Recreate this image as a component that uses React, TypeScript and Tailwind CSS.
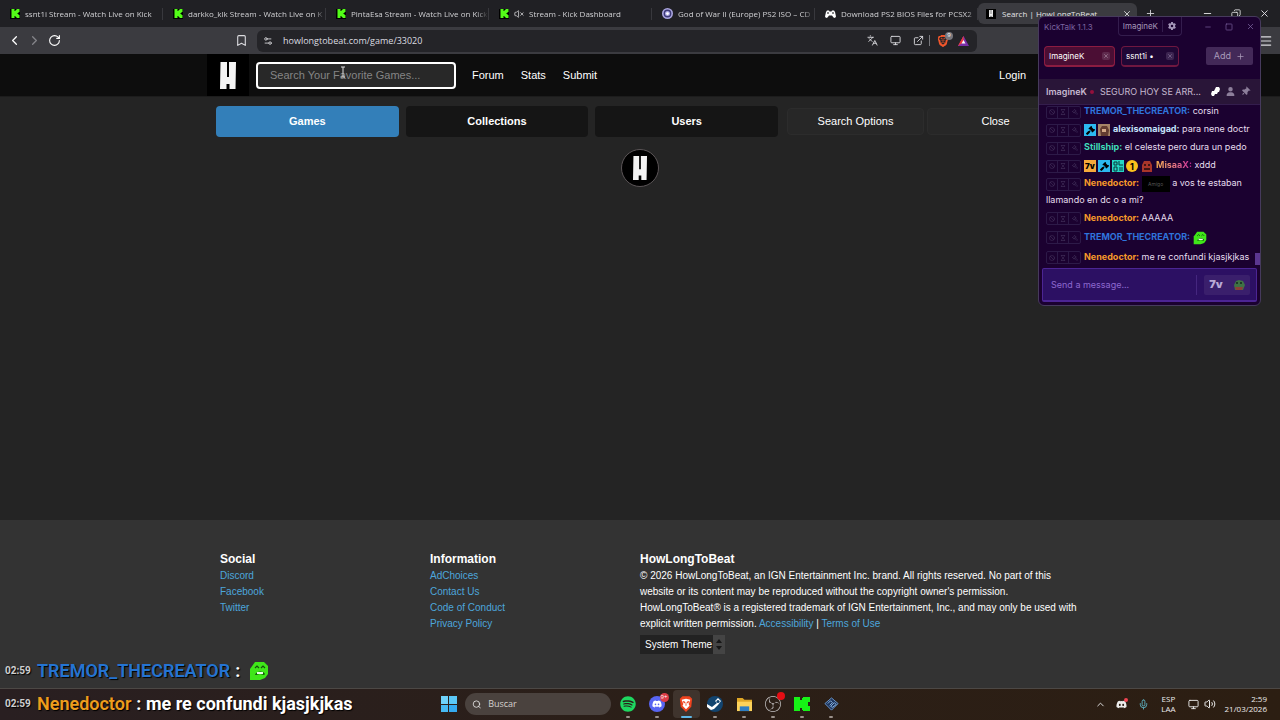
import type { ReactNode } from 'react'
import {
  Ban,
  Bookmark,
  ChevronLeft,
  ChevronRight,
  ChevronUp,
  Copy,
  ExternalLink,
  Gavel,
  Hourglass,
  Languages,
  Menu,
  Mic,
  Minus,
  Monitor,
  Plus,
  RotateCw,
  Search,
  Settings2,
  Square,
  Volume2,
  VolumeX,
  X,
} from 'lucide-react'
import {
  FaBrave,
  FaDiscord,
  FaGavel,
  FaGear,
  FaSpotify,
  FaThumbtack,
  FaUser,
} from 'react-icons/fa6'
import { SiKick, SiObsstudio } from 'react-icons/si'

function KickIcon() {
  return (
    <span className="flex size-[10px] shrink-0 items-center justify-center bg-black">
      <SiKick className="size-[9px] text-[#53fc18]" />
    </span>
  )
}

function HLogo({ className }: { className: string }) {
  return (
    <svg viewBox="0 0 16 27" className={className} fill="#f4f4f4" preserveAspectRatio="none">
      <path d="M.5 0h6.500v15h2V0h7l-.5 27H9.500v-5h-3v5H0z" />
    </svg>
  )
}

function FrogEmote({ className }: { className: string }) {
  return (
    <svg viewBox="0 0 20 20" className={className}>
      <path d="M6 1h9l4 4v8l-3 4-5 2H1V8z" fill="#3fe619" />
      <path d="M6 7l2-2 2 2M12 7l2-2 2 2" stroke="#14500c" strokeWidth="1.2" fill="none" />
      <path d="M6 14c1-4 8-5 10-1l-1 1-4-1-4 1z" fill="#14500c" />
      <path d="M8 11h6v2H8z" fill="#e9ffe5" />
    </svg>
  )
}

function DiscIcon() {
  return (
    <svg viewBox="0 0 24 24" className="size-[11px] shrink-0">
      <circle cx="12" cy="12" r="12" fill="#aba6e0" />
      <circle cx="12" cy="12" r="7" fill="none" stroke="#3d3a77" strokeWidth="3" />
      <circle cx="12" cy="12" r="3" fill="#fff" />
    </svg>
  )
}

function ControllerIcon() {
  return (
    <svg viewBox="0 0 22 16" className="h-[8px] w-[11px] shrink-0">
      <path d="M4 1h4l1 2h4l1-2h4l2 3 2 9-2 3-3-1-3-4H8l-3 4-3 1-2-3 2-9z" fill="#fff" />
      <path d="M4 6h4M6 4v4M14 6h4M16 4v4" stroke="#202024" strokeWidth="1.3" />
    </svg>
  )
}

const tabs: { title: string; icon: ReactNode; muted?: boolean }[] = [
  { title: 'ssnt1i Stream - Watch Live on Kick', icon: <KickIcon /> },
  { title: 'darkko_klk Stream - Watch Live on K', icon: <KickIcon /> },
  { title: 'PintaEsa Stream - Watch Live on Kick', icon: <KickIcon /> },
  { title: 'Stream - Kick Dashboard', icon: <KickIcon />, muted: true },
  { title: 'God of War II (Europe) PS2 ISO – CD', icon: <DiscIcon /> },
  { title: 'Download PS2 BIOS Files for PCSX2', icon: <ControllerIcon /> },
]

function TabStrip() {
  return (
    <div className="flex h-[27px] items-center bg-[#202024] text-[8px] text-[#d0d0d3]">
      {tabs.map((tab) => (
        <button key={tab.title} className="flex h-[22px] w-[163px] items-center text-left">
          <span className="flex min-w-0 flex-1 items-center gap-[5px] pl-[10px]">
            {tab.icon}
            {tab.muted && <VolumeX className="size-[10px] shrink-0" />}
            <span className="flex-1 overflow-hidden whitespace-nowrap [mask-image:linear-gradient(to_right,black_92%,transparent)]">
              {tab.title}
            </span>
          </span>
          <span className="h-[12px] w-px bg-[#38383d]" />
        </button>
      ))}
      <div className="flex h-[21px] w-[159px] items-center rounded-md bg-[#3b3b40] pr-[5px] pl-[8px] text-[#e4e4e6]">
        <span className="mr-[6px] flex size-[10px] items-center justify-center bg-black">
          <HLogo className="h-[7px] w-[4px]" />
        </span>
        <span className="flex-1 whitespace-nowrap">Search | HowLongToBeat</span>
        <button aria-label="Close tab">
          <X className="size-[10px]" />
        </button>
      </div>
      <button aria-label="New tab" className="ml-[8px]">
        <Plus className="size-[11px]" />
      </button>
      <div className="ml-auto flex gap-[18px] pr-[10px] text-[#e4e4e6]">
        <button aria-label="Minimize"><Minus className="size-[11px]" /></button>
        <button aria-label="Restore"><Copy className="size-[10px] -scale-x-100" /></button>
        <button aria-label="Close"><X className="size-[11px]" /></button>
      </div>
    </div>
  )
}

function Toolbar() {
  return (
    <div className="flex h-[27px] items-center bg-[#3b3b40] text-[#dcdce0]">
      <div className="flex w-[257px] items-center pr-[9px] pl-[7px]">
        <button aria-label="Back"><ChevronLeft className="size-[15px] text-white" /></button>
        <button aria-label="Forward" className="ml-[5px]"><ChevronRight className="size-[15px] text-[#85858a]" /></button>
        <button aria-label="Reload" className="ml-[6px]"><RotateCw className="size-[13px] text-white" /></button>
        <button aria-label="Bookmark" className="ml-auto"><Bookmark className="size-[13px]" /></button>
      </div>
      <div className="flex h-[22px] flex-1 items-center rounded-md bg-[#242428] pr-[8px] pl-[6px]">
        <Settings2 className="size-[10px]" />
        <input
          aria-label="Address"
          defaultValue="howlongtobeat.com/game/33020"
          className="ml-[10px] min-w-0 flex-1 bg-transparent text-[9px] outline-none"
        />
        <div className="flex items-center gap-[12px]">
          <Languages className="size-[11px]" />
          <Monitor className="size-[11px]" />
          <ExternalLink className="size-[11px]" />
        </div>
        <span className="mx-[5px] h-[11px] w-px bg-[#77777c]" />
        <span className="relative mr-[9px] ml-[2px]">
          <FaBrave className="size-[12px] text-[#f1562b]" />
          <span className="absolute -top-[3px] -right-[4px] flex size-[8px] items-center justify-center rounded-full bg-[#77777d] text-[6px] text-white">
            9
          </span>
        </span>
        <svg viewBox="0 0 22 20" className="h-[10px] w-[11px]">
          <path d="M11 0L0 20h11z" fill="#e2315a" />
          <path d="M11 0l11 20H0l4-6z" fill="#7a2fa8" />
          <path d="M11 0L0 20l11-8z" fill="#ee3b3b" />
          <path d="M11 8l4 7H7z" fill="#fff" />
        </svg>
      </div>
      <div className="flex w-[303px] justify-end pr-[7px]">
        <button aria-label="Menu"><Menu className="size-[14px]" /></button>
      </div>
    </div>
  )
}

function SiteHeader() {
  return (
    <header className="h-[43px] border-b border-[#1c1c1c] bg-[#0d0d0d]">
      <div className="mx-auto flex h-full max-w-[866px] items-center text-[11px] text-white">
        <a href="#home" aria-label="Home" className="flex h-full w-[42px] items-center justify-center bg-black">
          <HLogo className="h-[27px] w-[16px]" />
        </a>
        <input
          type="search"
          aria-label="Search games"
          placeholder="Search Your Favorite Games..."
          className="ml-[7px] h-[27px] w-[200px] rounded border-2 border-white bg-[#282828] px-[12px] placeholder:text-[#858585]"
        />
        <nav className="ml-[16px] flex flex-1 gap-[17px]">
          <a href="#forum">Forum</a>
          <a href="#stats">Stats</a>
          <a href="#submit">Submit</a>
          <a href="#login" className="mr-[47px] ml-auto">Login</a>
        </nav>
      </div>
    </header>
  )
}

function SearchPage() {
  return (
    <main className="flex-1 bg-[#242424] pt-[9px]">
      <div className="mx-auto flex max-w-[848px] items-center text-[11px] text-white">
        <div className="flex flex-1 gap-[7px] font-bold">
          <button className="h-[31px] flex-1 rounded-sm bg-[#337fb9]">Games</button>
          <button className="h-[31px] flex-1 rounded-sm bg-[#151515]">Collections</button>
          <button className="h-[31px] flex-1 rounded-sm bg-[#151515]">Users</button>
        </div>
        <div className="ml-[9px] flex w-[277px] gap-[3px]">
          <button className="h-[27px] flex-1 rounded-sm border border-[#2c2c2c] bg-[#272727]">Search Options</button>
          <button className="h-[27px] flex-1 rounded-sm border border-[#2c2c2c] bg-[#272727]">Close</button>
        </div>
      </div>
      <div className="mx-auto mt-[12px] flex size-[38px] items-center justify-center rounded-full border border-[#5b5557] bg-black">
        <HLogo className="h-[24px] w-[14px]" />
      </div>
    </main>
  )
}

const socialLinks = ['Discord', 'Facebook', 'Twitter']
const infoLinks = ['AdChoices', 'Contact Us', 'Code of Conduct', 'Privacy Policy']

function LinkColumn({ title, links }: { title: string; links: string[] }) {
  return (
    <div className="w-[210px] shrink-0">
      <h2 className="mb-px text-[12px] font-bold text-white">{title}</h2>
      <ul>
        {links.map((link) => (
          <li key={link}>
            <a href="#" className="text-[#4da6dc]">{link}</a>
          </li>
        ))}
      </ul>
    </div>
  )
}

function Footer() {
  return (
    <footer className="bg-[#333] pt-[31px] pb-[34px]">
      <div className="mx-auto flex max-w-[840px] text-[10px] leading-[16px] text-white">
        <LinkColumn title="Social" links={socialLinks} />
        <LinkColumn title="Information" links={infoLinks} />
        <div className="min-w-0 flex-1">
          <h2 className="mb-px text-[12px] font-bold">HowLongToBeat</h2>
          <p className="whitespace-nowrap">
            © 2026 HowLongToBeat, an IGN Entertainment Inc. brand. All rights reserved. No part of this
            <br />
            website or its content may be reproduced without the copyright owner's permission.
          </p>
          <p className="whitespace-nowrap">
            HowLongToBeat® is a registered trademark of IGN Entertainment, Inc., and may only be used with
            <br />
            explicit written permission. <a href="#" className="text-[#4da6dc]">Accessibility</a> |{' '}
            <a href="#" className="text-[#4da6dc]">Terms of Use</a>
          </p>
          <div className="mt-[3px] flex h-[19px] w-[85px] items-center bg-[#222]">
            <select aria-label="Theme" className="w-[73px] appearance-none pl-[5px] text-[10px] outline-none">
              <option>System Theme</option>
            </select>
            <svg viewBox="0 0 12 19" className="h-full w-[12px] bg-[#444]">
              <path d="M3 8l3-4 3 4zM3 11l3 4 3-4z" fill="#161616" />
            </svg>
          </div>
        </div>
      </div>
    </footer>
  )
}

function ModTools() {
  return (
    <span className="mr-[3px] inline-flex h-[13px] divide-x divide-[#2d1a48] rounded-xs border border-[#2d1a48] align-middle text-[#4a3a63]">
      <span className="flex w-[11px] items-center justify-center"><Ban className="size-[6px]" /></span>
      <span className="flex w-[11px] items-center justify-center"><Hourglass className="size-[6px]" /></span>
      <span className="flex w-[11px] items-center justify-center"><Gavel className="size-[6px] -scale-x-100" /></span>
    </span>
  )
}

function ModBadge() {
  return (
    <span className="mr-[2px] inline-flex size-[12px] items-center justify-center bg-[#2cb9f0] align-middle">
      <FaGavel className="size-[9px] text-black" />
    </span>
  )
}

function BrownBadge() {
  return (
    <svg viewBox="0 0 12 12" className="mr-[3px] inline size-[12px] align-middle">
      <path d="M0 0h12v12H0z" fill="#a58467" />
      <path d="M2 5l2-3h5l2 4-1 6H3z" fill="#633c31" />
      <path d="M4 5h4v3H4z" fill="#d3a987" />
    </svg>
  )
}

function MisaaBadges() {
  return (
    <>
      <span className="mr-[2px] inline-flex size-[12px] items-center justify-center bg-[#f6a93b] align-middle text-[8px] leading-none font-black text-black">
        7v
      </span>
      <ModBadge />
      <svg viewBox="0 0 12 12" className="mr-[2px] inline size-[12px] align-middle">
        <path d="M0 0h12v12H0z" fill="#25d5c5" />
        <path d="M2 2h3v3H2zM7 1v4h4M2 7v4h3V7zM7 8h4M7 10h4" stroke="#09363c" fill="none" />
      </svg>
      <span className="mr-[3px] inline-flex size-[12px] items-center justify-center rounded-full bg-[#fbc11d] align-middle text-[9px] leading-none font-bold text-black">
        1
      </span>
      <svg viewBox="0 0 12 12" className="mr-[3px] inline size-[12px] align-middle">
        <path d="M1 12V5l2-4h6l2 4v7z" fill="#a8352a" />
        <path d="M3 4h2v2H3zM7 4h2v2H7zM3 8h6v2H3z" fill="#3f1414" />
      </svg>
    </>
  )
}

type ChatLine = {
  user: string
  color: string
  text?: ReactNode
  badges?: ReactNode
  tall?: boolean
}

const chat: ChatLine[] = [
  { user: 'TREMOR_THECREATOR:', color: 'text-[#2f74dc]', text: 'corsin' },
  { user: 'alexisomaigad:', color: 'text-[#c5e3fb]', text: 'para nene doctr', badges: <><ModBadge /><BrownBadge /></> },
  { user: 'Stillship:', color: 'text-[#3fdcb9]', text: 'el celeste pero dura un pedo' },
  {
    user: 'MisaaX:',
    color: 'bg-linear-to-r from-[#f6b04a] to-[#d0219c] bg-clip-text text-transparent',
    text: 'xddd',
    badges: <MisaaBadges />,
  },
  {
    user: 'Nenedoctor:',
    color: 'text-[#f79a2a]',
    text: (
      <>
        <span className="inline-flex h-[16px] w-[28px] items-center justify-center bg-black align-middle text-[5px] leading-none text-[#555]">
          Amigo
        </span>{' '}
        a vos te estaban llamando en dc o a mi?
      </>
    ),
  },
  { user: 'Nenedoctor:', color: 'text-[#f79a2a]', text: 'AAAAA' },
  { user: 'TREMOR_THECREATOR:', color: 'text-[#2f74dc]', text: <FrogEmote className="inline size-[14px] align-middle" />, tall: true },
  { user: 'Nenedoctor:', color: 'text-[#f79a2a]', text: 'me re confundi kjasjkjkas', tall: true },
]

function KickTalk() {
  return (
    <section className="absolute top-[16px] right-[19px] flex w-[223px] flex-col overflow-hidden rounded-md border border-[#463a5c] bg-[#1b0130] font-['Inter',sans-serif] text-[9px] text-[#e6deee]">
      <div className="flex h-[19px] items-center pl-[5px] text-[8px] text-[#7c64a0]">
        <span className="flex-1 whitespace-nowrap">KickTalk 1.1.3</span>
        <div className="flex h-full items-center rounded-b-sm border border-t-0 border-[#341d4d] text-[#a496b8]">
          <span className="border-r border-[#341d4d] px-[4px]">ImagineK</span>
          <button aria-label="Settings" className="px-[5px]"><FaGear className="size-[8px]" /></button>
        </div>
        <div className="ml-[22px] flex gap-[13px] pr-[5px]">
          <button aria-label="Minimize chat"><Minus className="size-[8px]" /></button>
          <button aria-label="Maximize chat"><Square className="size-[8px]" /></button>
          <button aria-label="Close chat"><X className="size-[9px]" /></button>
        </div>
      </div>

      <div className="flex h-[43px] items-center gap-[6px] px-[7px] pb-[3px] pl-[5px] text-[8px] text-white">
        <button className="flex h-[21px] w-[71px] items-center justify-between rounded-sm border border-b-2 border-[#8c1c41] bg-[#4b0e34] px-[4px]">
          ImagineK
          <X className="size-[8px] rounded-xs bg-[#5f2a4d] p-px text-[#bfa3b9]" />
        </button>
        <button className="flex h-[21px] w-[58px] items-center justify-between rounded-sm border border-b-2 border-[#6f1740] bg-[#200735] px-[4px]">
          ssnt1i •
          <X className="size-[8px] rounded-xs bg-[#3d2551] p-px text-[#9c8ab0]" />
        </button>
        <button className="ml-auto flex h-[18px] items-center gap-[5px] rounded-xs bg-[#432958] px-[8px] text-[9px] text-[#aa9bb8]">
          Add <Plus className="size-[9px]" />
        </button>
      </div>

      {/* Channel title */}
      <div className="flex h-[25px] items-center bg-[#291538] px-[7px] text-[9px] text-[#c6b9d0]">
        <span className="font-semibold">ImagineK</span>
        <span className="ml-[3px] size-[4px] rounded-full bg-[#93103c]" />
        <span className="ml-[6px] flex-1 whitespace-nowrap">SEGURO HOY SE ARR...</span>
        <div className="flex items-center gap-[6px] pr-[3px] text-[#8d7f9b]">
          <svg viewBox="0 0 9 9" className="size-[9px]" fill="#fff">
            <path d="M5 0h3l1 2-1 3H7L6 7H4L3 9H1L0 7l1-3h2l1-2z" />
          </svg>
          <FaUser className="size-[9px]" />
          <FaThumbtack className="size-[9px] rotate-45" />
        </div>
      </div>

      <div className="flex h-[163px] flex-col justify-end overflow-hidden border-t border-[#341d4d] pr-[3px] pl-[7px] text-[9px] leading-[16px]">
        {chat.map((line, i) => (
          <p key={i} className={line.tall ? 'shrink-0 py-[2px]' : 'shrink-0 py-px'}>
            <ModTools />
            {line.badges}
            <b className={line.color}>{line.user}</b> {line.text}
          </p>
        ))}
      </div>
      <span className="absolute top-[236px] right-0 h-[12px] w-[5px] bg-[#5b3690]" />

      <form className="m-[3px] mt-px flex h-[34px] items-center rounded-xs border border-b-2 border-[#4c2594] bg-[#2c1063] pr-[6px]">
        <input
          aria-label="Message"
          placeholder="Send a message..."
          className="min-w-0 flex-1 pl-[8px] outline-none placeholder:text-[#8d68cf]"
        />
        <span className="h-[20px] w-px bg-[#45267f]" />
        <div className="ml-[7px] flex h-[20px] w-[46px] items-center justify-around rounded-xs bg-[#3a1f6c]">
          <button type="button" className="text-[11px] font-black text-[#b9a9d6]">7v</button>
          <button type="button" aria-label="Emotes">
            <svg viewBox="0 0 12 12" className="size-[12px]">
              <path d="M1 6l2-4 3-1 4 1 2 4-2 5H2z" fill="#3f7245" />
              <path d="M2 8h8l-1 3H3z" fill="#8b4037" />
              <path d="M4 3v2M8 3v2" stroke="#132c1b" strokeWidth="1.5" />
            </svg>
          </button>
        </div>
      </form>
    </section>
  )
}

function TaskbarApp({ label, active, children }: { label: string; active?: boolean; children: ReactNode }) {
  return (
    <button
      aria-label={label}
      className={`relative flex h-[28px] w-[27px] items-center justify-center rounded-sm ${active ? 'bg-[#3f342d]' : ''}`}
    >
      {children}
      <span className={`absolute bottom-0 h-[2px] rounded-full ${active ? 'w-[11px] bg-[#5fb8e8]' : 'w-[4px] bg-[#9b928c]'}`} />
    </button>
  )
}

function Taskbar() {
  return (
    <div className="grid h-[32px] grid-cols-[1fr_auto_1fr] items-center border-t border-[#4c4845] bg-linear-to-r from-[#291f21] via-[#2b1f18] to-[#2c1e12] pb-px text-[#ececec]">
      <span />
      <div className="flex items-center gap-[2px] pl-[5px]">
        <button aria-label="Start" className="mr-[6px] grid size-[16px] grid-cols-2 gap-px">
          <span className="bg-[#6fd3fb]" />
          <span className="bg-[#5bc8f7]" />
          <span className="bg-[#47baf2]" />
          <span className="bg-[#35aaf0]" />
        </button>
        <label className="mr-[2px] flex h-[22px] w-[146px] items-center gap-[7px] rounded-full bg-[#4a423e] pl-[7px]">
          <Search className="size-[11px]" />
          <input aria-label="Buscar" placeholder="Buscar" className="w-full min-w-0 outline-none placeholder:text-[#d5d1ce]" />
        </label>
        <TaskbarApp label="Spotify"><FaSpotify className="size-[16px] text-[#1ed760]" /></TaskbarApp>
        <TaskbarApp label="Discord">
          <span className="flex size-[16px] items-center justify-center rounded-full bg-[#5865f2]">
            <FaDiscord className="size-[10px] text-white" />
          </span>
          <span className="absolute top-[3px] right-[2px] flex size-[9px] items-center justify-center rounded-full bg-[#dc3b46] text-[6px] text-white">
            9+
          </span>
        </TaskbarApp>
        <TaskbarApp label="Brave" active>
          <svg viewBox="0 0 16 18" className="h-[16px] w-[14px]">
            <path d="M4 0h8l3 3-1 9-6 6-6-6-1-9z" fill="#f0431e" />
            <path d="M3 4l5-1 5 1-2 5 1 2-4 4-4-4 1-2z" fill="#fff" />
            <path d="M5 6l2 1-1 1zM11 6L9 7l1 1zM8 8v3" fill="#f0431e" stroke="#f0431e" />
          </svg>
        </TaskbarApp>
        <TaskbarApp label="Steam">
          <svg viewBox="0 0 16 16" className="size-[16px]">
            <circle cx="8" cy="8" r="8" fill="#12446f" />
            <path d="M0 8l5 3 5-4-2-2 3-3 3 3-3 4-4 4-3 1-4-3z" fill="#fff" />
            <circle cx="11" cy="5.500" r="1.600" fill="#12446f" />
          </svg>
        </TaskbarApp>
        <TaskbarApp label="Explorador">
          <svg viewBox="0 0 18 16" className="h-[15px] w-[17px]">
            <path d="M1 1h6l2 2h8v12H1z" fill="#e0a726" />
            <path d="M1 5h16v10H1z" fill="#fdd35b" />
            <path d="M4 10h10v5H4z" fill="#2f7fc4" />
          </svg>
        </TaskbarApp>
        <TaskbarApp label="OBS Studio">
          <SiObsstudio className="size-[16px] text-[#c4c2c3]" />
          <span className="absolute top-[2px] right-[2px] size-[8px] rounded-full bg-[#e60e14]" />
        </TaskbarApp>
        <TaskbarApp label="Kick">
          <svg viewBox="0 0 16 14" className="h-[14px] w-[16px]">
            <path d="M0 0h6v3h2V1h1V0h7v5h-2v4h2v5H9v-1H8v-2H6v3H0z" fill="#16f216" />
          </svg>
        </TaskbarApp>
        <TaskbarApp label="PCSX2">
          <svg viewBox="0 0 16 16" className="size-[15px]">
            <path d="M8 1l7 6-7 7-7-7z" fill="#1e365e" stroke="#6e9bd1" />
            <path d="M4 7l3-3 2 2-3 3M7 10l4-4 2 2-4 3z" fill="none" stroke="#8cb5e4" />
          </svg>
        </TaskbarApp>
      </div>

      <div className="flex items-center justify-end pr-[13px]">
        <ChevronUp className="size-[11px]" />
        <span className="relative ml-[10px]">
          <FaDiscord className="size-[11px]" />
          <span className="absolute -top-px -right-px size-[4px] rounded-full bg-[#f04452]" />
        </span>
        <Mic className="ml-[11px] size-[11px] text-[#5fb6c6]" />
        <span className="ml-[12px] text-center text-[8px] leading-[10px]">
          ESP
          <br />
          LAA
        </span>
        <Monitor className="ml-[12px] size-[11px]" />
        <Volume2 className="ml-[5px] size-[12px]" />
        <span className="ml-[9px] text-right text-[8px] leading-[10px]">
          2:59
          <br />
          21/03/2026
        </span>
      </div>
    </div>
  )
}

// Stream chat shown over the desktop
function ChatOverlay() {
  return (
    <div className="absolute bottom-0 left-0 font-['Roboto',sans-serif] text-[18px] text-white [text-shadow:1px_1px_1px_#000]">
      <p className="flex h-[33px] items-center pl-[5px]">
        <time className="w-[32px] text-[10px] font-bold text-[#cfcfcf]">02:59</time>
        <span className="font-semibold text-[#2474d2]">TREMOR_THECREATOR</span>
        <span className="ml-[5px] font-bold">:</span>
        <FrogEmote className="ml-[9px] size-[20px]" />
      </p>
      <p className="flex h-[33px] items-center pl-[5px]">
        <time className="w-[32px] text-[10px] font-bold text-[#cfcfcf]">02:59</time>
        <span className="font-semibold text-[#ee9d1d]">Nenedoctor</span>
        <span className="ml-[5px] font-bold">: me re confundi kjasjkjkas</span>
      </p>
    </div>
  )
}

export default function App() {
  return (
    <div className="relative flex min-h-screen flex-col overflow-hidden bg-[#242424] font-['Liberation_Sans',sans-serif]">
      <div className="font-['Open_Sans',sans-serif] text-[9px]">
        <TabStrip />
        <Toolbar />
      </div>
      <SiteHeader />
      <SearchPage />
      <Footer />
      <div className="font-['Open_Sans',sans-serif] text-[9px]">
        <Taskbar />
      </div>
      <KickTalk />
      <ChatOverlay />
      {/* Mouse pointer */}
      <svg viewBox="0 0 6 12" className="absolute top-[66px] left-[340px] h-[12px] w-[6px]" stroke="#ddd" fill="none">
        <path d="M1 1h4M3 1v10M1 11h4" />
      </svg>
    </div>
  )
}
